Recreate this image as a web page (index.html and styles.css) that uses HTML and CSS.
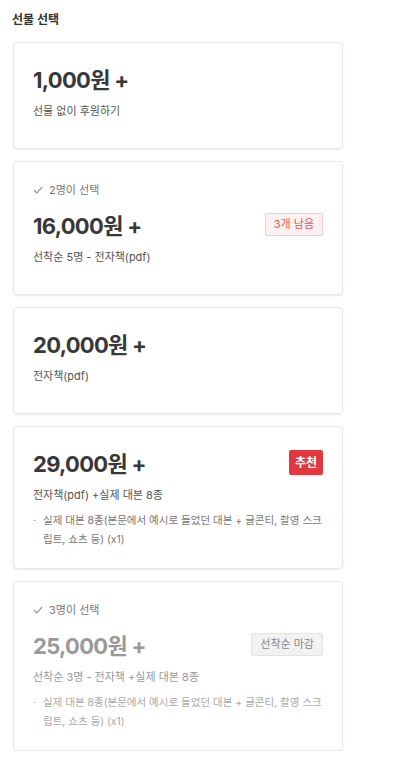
FILE: index.html
```html
<!DOCTYPE html>
<html lang="ko">

<head>
    <meta charset="UTF-8">
    <meta name="viewport" content="width=device-width, initial-scale=1.0">
    <title>선물 선택</title>
    <link rel="stylesheet" href="styles.css">
</head>

<body>
    <div class="rewards">
        <h2 class="title">선물 선택</h2>

        <div class="reward">
            <div class="priceRow">
                <span class="price">1,000원 +</span>
            </div>
            <p class="desc">선물 없이 후원하기</p>
        </div>

        <div class="reward">
            <div class="picked">
                <svg class="check" viewBox="0 0 10 8" width="10" height="8">
                    <path d="M1 4.2 L3.8 7 L9 1.2" fill="none" stroke="currentColor" stroke-width="1.1" />
                </svg>
                2명이 선택
            </div>
            <div class="priceRow">
                <span class="price">16,000원 +</span>
                <span class="badge left">3개 남음</span>
            </div>
            <p class="desc">선착순 5명 - 전자책(pdf)</p>
        </div>

        <div class="reward">
            <div class="priceRow">
                <span class="price">20,000원 +</span>
            </div>
            <p class="desc">전자책(pdf)</p>
        </div>

        <div class="reward">
            <div class="priceRow">
                <span class="price">29,000원 +</span>
                <span class="badge best">추천</span>
            </div>
            <p class="desc">전자책(pdf) +실제 대본 8종</p>
            <ul class="items">
                <li>실제 대본 8종(본문에서 예시로 들었던 대본 + 글콘티, 촬영 스크립트, 쇼츠 등) (x1)</li>
            </ul>
        </div>

        <div class="reward soldout">
            <div class="picked">
                <svg class="check" viewBox="0 0 10 8" width="10" height="8">
                    <path d="M1 4.2 L3.8 7 L9 1.2" fill="none" stroke="currentColor" stroke-width="1.1" />
                </svg>
                3명이 선택
            </div>
            <div class="priceRow">
                <span class="price">25,000원 +</span>
                <span class="badge closed">선착순 마감</span>
            </div>
            <p class="desc">선착순 3명 - 전자책 +실제 대본 8종</p>
            <ul class="items">
                <li>실제 대본 8종(본문에서 예시로 들었던 대본 + 글콘티, 촬영 스크립트, 쇼츠 등) (x1)</li>
            </ul>
        </div>
    </div>
</body>

</html>
```

FILE: styles.css
```css
body {
    margin: 0;
    padding: 0 0 0 12px;
    background: #ffffff;
    font-family: Inter, "Noto Sans CJK KR", sans-serif;
    color: #333;
}

.rewards {
    width: 331px;
    display: flex;
    flex-direction: column;
    gap: 12px;
}

.title {
    margin: 0 0 1px;
    padding-top: 11px;
    height: 18px;
    font-size: 12px;
    line-height: 18px;
    font-weight: bold;
    color: #333;
}

.reward {
    margin-left: 1px;
    background: white;
    border: 1px solid #e8e8e8;
    border-radius: 4px;
    box-shadow: 0px 1px 2px rgba(0, 0, 0, 0.08);
    padding: 20px 19px 19px;
}

.picked {
    display: flex;
    align-items: center;
    gap: 6px;
    font-size: 11px;
    line-height: 16px;
    color: #777;
    margin-bottom: 11px;
}

.check {
    color: #888;
}

.priceRow {
    display: flex;
    justify-content: space-between;
    align-items: center;
    height: 30px;
}

.price {
    font-size: 22px;
    font-weight: bold;
    color: #383838;
    letter-spacing: -0.7px;
}

.badge {
    font-size: 11px;
    line-height: 21px;
    padding: 0 8px;
    border-radius: 2px;
    letter-spacing: 0;
}

.left {
    color: #e15a5a;
    background: #fdf0f0;
    border: 1px solid #f6c9c9;
}

.best {
    color: white;
    background: #e0383e;
    font-weight: bold;
    font-size: 12px;
    line-height: 25px;
    padding: 0 6px;
}

.closed {
    color: #888;
    background: #f2f2f2;
    border: 1px solid #e2e2e2;
}

.desc {
    margin: 8px 0 8px;
    font-size: 11px;
    line-height: 20px;
    color: #555;
}

.items {
    margin: -2px 0 0;
    padding: 0;
    list-style: none;
}

.items li {
    position: relative;
    padding-left: 10px;
    font-size: 10.5px;
    line-height: 19px;
    color: #777;
}

.items li::before {
    content: "·";
    position: absolute;
    left: 0;
    top: 0;
}

.soldout .price,
.soldout .desc {
    color: #999;
}

.soldout .items li {
    color: #aaa;
}
```
